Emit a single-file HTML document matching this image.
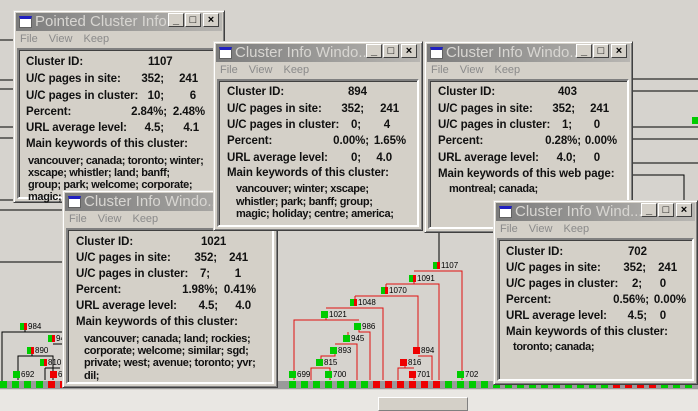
<!DOCTYPE html>
<html><head><meta charset="utf-8"><style>
*{margin:0;padding:0;box-sizing:border-box}
body{width:698px;height:411px;overflow:hidden;background:#d6d3ce;position:relative;font-family:"Liberation Sans",Arial,sans-serif}
svg.tree{position:absolute;left:0;top:0}
.win{position:absolute;background:#d4d0c8;border:1px solid;border-color:#dfdcd6 #404040 #404040 #dfdcd6;box-shadow:inset 1px 1px #fff,inset -1px -1px #808080}
.tb{position:absolute;left:2px;right:2px;top:2px;height:18px;background:linear-gradient(90deg,#7c7c7c,#b8b6b2);overflow:hidden}
.tb .ic{position:absolute;left:3px;top:3px;width:13px;height:12px;background:#fff;border:1px solid #606060;border-top:3px solid #2020c0}
.tb .tt{position:absolute;left:19px;top:0;font-size:15px;line-height:18px;color:#d8d6d2;white-space:nowrap}
.bt{position:absolute;top:2px;width:16px;height:14px;background:#d4d0c8;border:1px solid;border-color:#fff #404040 #404040 #fff;font-size:11px;font-weight:bold;line-height:12px;text-align:center;color:#000}
.mn{position:absolute;left:6px;top:22px;font-size:11px;color:#8a8a8a;word-spacing:8px}
.pn{position:absolute;left:3px;right:3px;top:37px;bottom:3px;border:2px solid;border-color:#808080 #fff #fff #808080;box-shadow:inset 1px 1px #404040}
.r{position:absolute;font-size:11.5px;font-weight:bold;line-height:14px;color:#111;white-space:nowrap;letter-spacing:-0.1px}
.k{position:absolute;font-size:11px;font-weight:bold;line-height:12px;color:#111;white-space:nowrap;letter-spacing:-0.35px}
.bot{position:absolute;left:0;top:390px;width:698px;height:21px;background:#e9e7e3}
.thumb{position:absolute;left:378px;top:397px;width:90px;height:14px;background:#d4d0c8;border:1px solid;border-color:#fff #808080 #808080 #fff}
</style></head><body>
<svg class="tree" width="698" height="411">
<g stroke="#000" stroke-width="1" fill="none">
<path d="M0 40H13M0 80H13M0 89H13M0 127H13M0 138H13M0 200H13M0 210H62M0 262H62"/>
<path d="M632 79H698M632 91H698M632 127H698M632 139H698M632 163H698M632 175H684V385M600 385V319H632M439 230V265"/>
<path d="M2 385V332H25M25 332H62M25 332V326M18 380V356H32M32 356V350M32 356H53V380M45 368V380M45 368H60M53 344H62"/>
</g>
<g stroke="#e01010" stroke-width="1" fill="none">
<path d="M414 271H462V380M386 284H414V278M414 284H439V380M355 296H418V350M418 356H432V380M405 368V362M405 368H398V380M405 368H414M414 374V380M355 296V302M326 308H383V380M326 314V320H294V380M359 320H326M359 326V332H370V380M348 332V338M335 344H357V380M335 350V356H321V362M321 368H311V380M321 368H330V374M330 374V380M294 374V380M386 284V290"/>
</g>
<rect x="0" y="381" width="698" height="8" fill="#9a9a9a"/>
<g font-size="8" font-family="Liberation Sans,sans-serif" fill="#000">
<text x="441" y="268">1107</text><text x="417" y="281">1091</text><text x="389" y="293">1070</text><text x="358" y="305">1048</text><text x="329" y="317">1021</text><text x="362" y="329">986</text><text x="351" y="341">945</text><text x="338" y="353">893</text><text x="324" y="365">815</text><text x="297" y="377">699</text><text x="333" y="377">700</text><text x="421" y="353">894</text><text x="408" y="365">816</text><text x="417" y="377">701</text><text x="465" y="377">702</text><text x="28" y="329">984</text><text x="56" y="341">946</text><text x="35" y="353">890</text><text x="48" y="365">810</text><text x="21" y="377">692</text><text x="58" y="377">60</text>
</g>
<g>
<rect x="433" y="262" width="7" height="7" fill="#0c0"/><rect x="437" y="262" width="3" height="7" fill="#e00"/>
<rect x="409" y="275" width="7" height="7" fill="#0c0"/><rect x="413" y="275" width="3" height="7" fill="#e00"/>
<rect x="381" y="287" width="7" height="7" fill="#0c0"/><rect x="385" y="287" width="3" height="7" fill="#e00"/>
<rect x="350" y="299" width="7" height="7" fill="#0c0"/><rect x="354" y="299" width="3" height="7" fill="#e00"/>
<rect x="321" y="311" width="7" height="7" fill="#0c0"/><rect x="354" y="323" width="7" height="7" fill="#0c0"/><rect x="343" y="335" width="7" height="7" fill="#0c0"/><rect x="330" y="347" width="7" height="7" fill="#0c0"/><rect x="316" y="359" width="7" height="7" fill="#0c0"/><rect x="289" y="371" width="7" height="7" fill="#0c0"/><rect x="325" y="371" width="7" height="7" fill="#0c0"/><rect x="457" y="371" width="7" height="7" fill="#0c0"/>
<rect x="413" y="347" width="7" height="7" fill="#e00"/><rect x="400" y="359" width="7" height="7" fill="#e00"/><rect x="409" y="371" width="7" height="7" fill="#e00"/>
<rect x="20" y="323" width="7" height="7" fill="#0c0"/><rect x="24" y="323" width="3" height="7" fill="#e00"/>
<rect x="48" y="335" width="7" height="7" fill="#0c0"/><rect x="52" y="335" width="3" height="7" fill="#e00"/>
<rect x="27" y="347" width="7" height="7" fill="#0c0"/><rect x="31" y="347" width="3" height="7" fill="#e00"/>
<rect x="40" y="359" width="7" height="7" fill="#0c0"/><rect x="44" y="359" width="3" height="7" fill="#e00"/>
<rect x="13" y="371" width="7" height="7" fill="#0c0"/><rect x="50" y="371" width="7" height="7" fill="#e00"/>
<rect x="692" y="117" width="6" height="7" fill="#0c0"/>
</g>
<g>
<rect x="0" y="381" width="7" height="7" fill="#0c0"/><rect x="12" y="381" width="7" height="7" fill="#0c0"/><rect x="24" y="381" width="7" height="7" fill="#0c0"/><rect x="36" y="381" width="7" height="7" fill="#0c0"/><rect x="48" y="381" width="7" height="7" fill="#e00"/><rect x="60" y="381" width="7" height="7" fill="#e00"/>
<rect x="289" y="381" width="7" height="7" fill="#0c0"/><rect x="301" y="381" width="7" height="7" fill="#0c0"/><rect x="313" y="381" width="7" height="7" fill="#0c0"/><rect x="325" y="381" width="7" height="7" fill="#0c0"/><rect x="337" y="381" width="7" height="7" fill="#0c0"/><rect x="349" y="381" width="7" height="7" fill="#0c0"/><rect x="361" y="381" width="7" height="7" fill="#0c0"/><rect x="373" y="381" width="7" height="7" fill="#e00"/><rect x="385" y="381" width="7" height="7" fill="#e00"/><rect x="397" y="381" width="7" height="7" fill="#e00"/><rect x="409" y="381" width="7" height="7" fill="#e00"/><rect x="421" y="381" width="7" height="7" fill="#e00"/><rect x="433" y="381" width="7" height="7" fill="#e00"/><rect x="445" y="381" width="7" height="7" fill="#0c0"/><rect x="457" y="381" width="7" height="7" fill="#0c0"/><rect x="469" y="381" width="7" height="7" fill="#0c0"/><rect x="481" y="381" width="7" height="7" fill="#0c0"/><rect x="493" y="381" width="7" height="7" fill="#0c0"/><rect x="505" y="381" width="7" height="7" fill="#0c0"/><rect x="517" y="381" width="7" height="7" fill="#0c0"/><rect x="529" y="381" width="7" height="7" fill="#0c0"/><rect x="541" y="381" width="7" height="7" fill="#0c0"/><rect x="553" y="381" width="7" height="7" fill="#0c0"/><rect x="565" y="381" width="7" height="7" fill="#0c0"/><rect x="577" y="381" width="7" height="7" fill="#0c0"/><rect x="589" y="381" width="7" height="7" fill="#0c0"/><rect x="601" y="381" width="7" height="7" fill="#0c0"/><rect x="613" y="381" width="7" height="7" fill="#e00"/><rect x="625" y="381" width="7" height="7" fill="#e00"/><rect x="637" y="381" width="7" height="7" fill="#e00"/><rect x="649" y="381" width="7" height="7" fill="#e00"/><rect x="661" y="381" width="7" height="7" fill="#0c0"/><rect x="673" y="381" width="7" height="7" fill="#0c0"/><rect x="685" y="381" width="7" height="7" fill="#0c0"/>
</g>
</svg>

<!-- W1 -->
<div class="win" style="left:13px;top:10px;width:212px;height:193px">
<div class="tb"><div class="ic"></div><div class="tt">Pointed Cluster Info.</div></div>
<div class="bt" style="right:40px">_</div><div class="bt" style="right:23px">□</div><div class="bt" style="right:5px">×</div>
<div class="mn">File View Keep</div>
<div class="pn"></div>
<div class="r" style="left:12px;top:44px">Cluster ID:</div><div class="r" style="left:134px;top:44px">1107</div>
<div class="r" style="left:12px;top:61px">U/C pages in site:</div><div class="r" style="right:60px;top:61px">352;</div><div class="r" style="right:26px;top:61px">241</div>
<div class="r" style="left:12px;top:78px">U/C pages in cluster:</div><div class="r" style="right:60px;top:78px">10;</div><div class="r" style="right:28px;top:78px">6</div>
<div class="r" style="left:12px;top:94px">Percent:</div><div class="r" style="right:57px;top:94px">2.84%;</div><div class="r" style="right:19px;top:94px">2.48%</div>
<div class="r" style="left:12px;top:110px">URL average level:</div><div class="r" style="right:60px;top:110px">4.5;</div><div class="r" style="right:25px;top:110px">4.1</div>
<div class="r" style="left:12px;top:126px">Main keywords of this cluster:</div>
<div class="k" style="left:14px;top:144px">vancouver; canada; toronto; winter;</div>
<div class="k" style="left:14px;top:156px">xscape; whistler; land; banff;</div>
<div class="k" style="left:14px;top:168px">group; park; welcome; corporate;</div>
<div class="k" style="left:14px;top:180px">magic;</div>
</div>

<!-- W4 -->
<div class="win" style="left:62px;top:190px;width:216px;height:198px">
<div class="tb"><div class="ic"></div><div class="tt">Cluster Info Windo...</div></div>
<div class="bt" style="right:40px">_</div><div class="bt" style="right:23px">□</div><div class="bt" style="right:5px">×</div>
<div class="mn">File View Keep</div>
<div class="pn"></div>
<div class="r" style="left:13px;top:44px">Cluster ID:</div><div class="r" style="left:138px;top:44px">1021</div>
<div class="r" style="left:13px;top:60px">U/C pages in site:</div><div class="r" style="right:60px;top:60px">352;</div><div class="r" style="right:29px;top:60px">241</div>
<div class="r" style="left:13px;top:76px">U/C pages in cluster:</div><div class="r" style="right:67px;top:76px">7;</div><div class="r" style="right:36px;top:76px">1</div>
<div class="r" style="left:13px;top:92px">Percent:</div><div class="r" style="right:59px;top:92px">1.98%;</div><div class="r" style="right:21px;top:92px">0.41%</div>
<div class="r" style="left:13px;top:108px">URL average level:</div><div class="r" style="right:59px;top:108px">4.5;</div><div class="r" style="right:26px;top:108px">4.0</div>
<div class="r" style="left:13px;top:124px">Main keywords of this cluster:</div>
<div class="k" style="left:21px;top:142px">vancouver; canada; land; rockies;</div>
<div class="k" style="left:21px;top:154px">corporate; welcome; similar; sgd;</div>
<div class="k" style="left:21px;top:166px">private; west; avenue; toronto; yvr;</div>
<div class="k" style="left:21px;top:179px">dil;</div>
</div>

<!-- W2 -->
<div class="win" style="left:213px;top:41px;width:210px;height:190px">
<div class="tb"><div class="ic"></div><div class="tt">Cluster Info Windo...</div></div>
<div class="bt" style="right:40px">_</div><div class="bt" style="right:23px">□</div><div class="bt" style="right:5px">×</div>
<div class="mn">File View Keep</div>
<div class="pn"></div>
<div class="r" style="left:13px;top:43px">Cluster ID:</div><div class="r" style="left:134px;top:43px">894</div>
<div class="r" style="left:13px;top:60px">U/C pages in site:</div><div class="r" style="right:58px;top:60px">352;</div><div class="r" style="right:23px;top:60px">241</div>
<div class="r" style="left:13px;top:76px">U/C pages in cluster:</div><div class="r" style="right:61px;top:76px">0;</div><div class="r" style="right:32px;top:76px">4</div>
<div class="r" style="left:13px;top:92px">Percent:</div><div class="r" style="right:53px;top:92px">0.00%;</div><div class="r" style="right:16px;top:92px">1.65%</div>
<div class="r" style="left:13px;top:109px">URL average level:</div><div class="r" style="right:61px;top:109px">0;</div><div class="r" style="right:30px;top:109px">4.0</div>
<div class="r" style="left:13px;top:124px">Main keywords of this cluster:</div>
<div class="k" style="left:22px;top:141px">vancouver; winter; xscape;</div>
<div class="k" style="left:22px;top:154px">whistler; park; banff; group;</div>
<div class="k" style="left:22px;top:166px">magic; holiday; centre; america;</div>
</div>

<!-- W3 -->
<div class="win" style="left:424px;top:41px;width:209px;height:192px">
<div class="tb"><div class="ic"></div><div class="tt">Cluster Info Windo...</div></div>
<div class="bt" style="right:40px">_</div><div class="bt" style="right:23px">□</div><div class="bt" style="right:5px">×</div>
<div class="mn">File View Keep</div>
<div class="pn"></div>
<div class="r" style="left:13px;top:43px">Cluster ID:</div><div class="r" style="left:133px;top:43px">403</div>
<div class="r" style="left:13px;top:60px">U/C pages in site:</div><div class="r" style="right:57px;top:60px">352;</div><div class="r" style="right:23px;top:60px">241</div>
<div class="r" style="left:13px;top:76px">U/C pages in cluster:</div><div class="r" style="right:60px;top:76px">1;</div><div class="r" style="right:32px;top:76px">0</div>
<div class="r" style="left:13px;top:92px">Percent:</div><div class="r" style="right:51px;top:92px">0.28%;</div><div class="r" style="right:15px;top:92px">0.00%</div>
<div class="r" style="left:13px;top:109px">URL average level:</div><div class="r" style="right:56px;top:109px">4.0;</div><div class="r" style="right:32px;top:109px">0</div>
<div class="r" style="left:13px;top:125px">Main keywords of this web page:</div>
<div class="k" style="left:24px;top:141px">montreal; canada;</div>
</div>

<!-- W5 -->
<div class="win" style="left:493px;top:200px;width:205px;height:185px">
<div class="tb"><div class="ic"></div><div class="tt">Cluster Info Wind...</div></div>
<div class="bt" style="right:40px">_</div><div class="bt" style="right:23px">□</div><div class="bt" style="right:5px">×</div>
<div class="mn">File View Keep</div>
<div class="pn"></div>
<div class="r" style="left:12px;top:44px">Cluster ID:</div><div class="r" style="left:134px;top:44px">702</div>
<div class="r" style="left:12px;top:60px">U/C pages in site:</div><div class="r" style="right:51px;top:60px">352;</div><div class="r" style="right:20px;top:60px">241</div>
<div class="r" style="left:12px;top:76px">U/C pages in cluster:</div><div class="r" style="right:55px;top:76px">2;</div><div class="r" style="right:31px;top:76px">0</div>
<div class="r" style="left:12px;top:92px">Percent:</div><div class="r" style="right:48px;top:92px">0.56%;</div><div class="r" style="right:11px;top:92px">0.00%</div>
<div class="r" style="left:12px;top:108px">URL average level:</div><div class="r" style="right:50px;top:108px">4.5;</div><div class="r" style="right:31px;top:108px">0</div>
<div class="r" style="left:12px;top:124px">Main keywords of this cluster:</div>
<div class="k" style="left:19px;top:140px">toronto; canada;</div>
</div>

<div class="bot"></div>
<div class="thumb"></div>
</body></html>
